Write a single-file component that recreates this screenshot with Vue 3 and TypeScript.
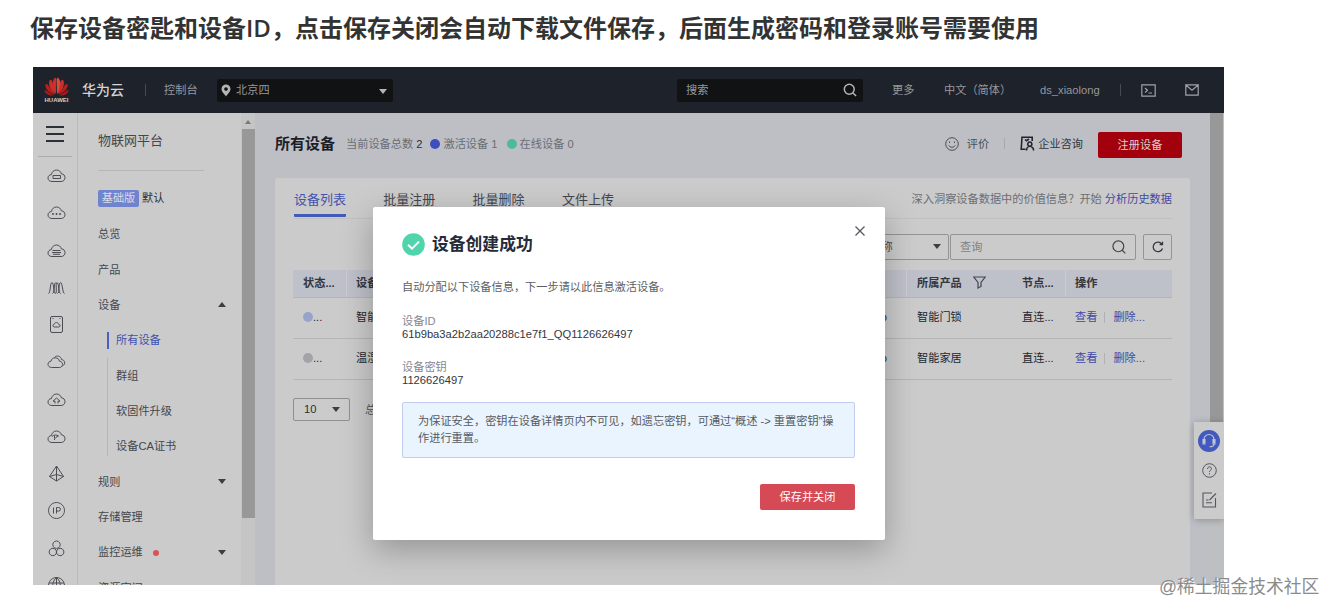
<script setup lang="ts">
interface RailIcon { d: string }
interface NavItem { label: string; arrow?: 'up' | 'down'; dot?: boolean; sub?: boolean; active?: boolean }

const cloud = 'M5 15.500C2.500 15.500 1 14 1 12c0-2 1.500-3.300 3.400-3.400C4.800 6 6.800 4 9.500 4c2.500 0 4.300 1.600 4.900 3.900 2.100 0 3.600 1.600 3.600 3.700 0 2.300-1.600 3.900-3.900 3.900z'

const rail: RailIcon[] = [
  { d: cloud + 'M6 9.500h7.500v3H6z' },
  { d: cloud + 'M5.500 10.500h1v1h-1zM9 10.500h1v1H9zM12.500 10.500h1v1h-1z' },
  { d: cloud + 'M5.500 9.500h8M5 11.500h9M6 13.300h7' },
  { d: 'M1.500 15.500C3.500 15.500 3 4.500 5 4.500s1.500 11 3.500 11S8 4.500 10 4.500s1.500 11 3.500 11M5.500 15.500c2 0 1.500-11 3-11M10.500 15.500c2 0 1-11 3-11s2 11 4 11' },
  { d: 'M5 1.500h9q1.500 0 1.500 1.500v13q0 1.500-1.500 1.500H5q-1.500 0-1.500-1.500V3q0-1.500 1.500-1.500zM7.500 12c-2 0-2-2.500-.3-2.700.3-2.300 4-2.300 4.500 0 2 .2 1.700 2.700 0 2.700zM5.500 3.500h1M12.500 3.500h1' },
  { d: 'M4.500 15.500C2.500 15.500 1 14 1 12.300c0-1.700 1.300-3 3-3.100C4.500 7 6 5.800 8.200 5.800c2.300 0 4 1.500 4.300 3.500 1.900 0 3 1.400 3 3.100 0 1.800-1.300 3.100-3.100 3.100zM7.500 5.500C9.500 3 14 3.800 14.500 7.600c3.500.2 4.500 4.400 1 6.400' },
  { d: cloud + 'M9.500 8l-3.500 3.200h2v2.300M9.500 8l3.500 3.200h-2v2.300' },
  { d: cloud + 'M5 9.500c2-1.800 4.500-2 6.500-.5-2 .5-3.500 2-4.300 4M7.500 8.500v3' },
  { d: 'M9.500 2L2.500 12.500l7 4.500 7-4.500zM9.500 2v15M2.500 12.500l7-2 7 2' },
  { d: 'M9.500 1.500a8 8 0 1 0 .01 0zM6.500 6.500v6M9.500 12.500v-6h2q2 0 2 1.800t-2 1.800h-2' },
  { d: 'M9.500 2a3.700 3.700 0 1 0 .01 0zM5.800 9.300a3.700 3.700 0 1 0 .01 0zM13.200 9.300a3.700 3.700 0 1 0 .01 0z' },
  { d: 'M9.500 1.500a8 8 0 1 0 .01 0zM9.500 1.500v16M9.500 1.500c-5 4-5 12 0 16 5-4 5-12 0-16M2 7h15M2 12h15' },
]

const nav: NavItem[] = [
  { label: '总览' },
  { label: '产品' },
  { label: '设备', arrow: 'up' },
  { label: '所有设备', sub: true, active: true },
  { label: '群组', sub: true },
  { label: '软固件升级', sub: true },
  { label: '设备CA证书', sub: true },
  { label: '规则', arrow: 'down' },
  { label: '存储管理' },
  { label: '监控运维', arrow: 'down', dot: true },
  { label: '资源空间' },
]

const tabs = ['设备列表', '批量注册', '批量删除', '文件上传']

const rows = [
  { tone: 'blue', name: '智能门锁', product: '智能门锁' },
  { tone: 'grey', name: '温湿度', product: '智能家居' },
]
</script>

<template>
  <div class="page">
    <h1 class="heading">保存设备密匙和设备ID，点击保存关闭会自动下载文件保存，后面生成密码和登录账号需要使用</h1>

    <div class="shot">
      <header class="top">
        <div class="logo">
          <svg width="25" height="19" viewBox="0 0 25 19">
            <g fill="#c9302c">
              <path d="M12 17C8 12 7.500 5 10.500 1c1.500-.8 1.800.5 1.800 2z" />
              <path d="M13 17c4-5 4.500-12 1.500-16-1.500-.8-1.800.5-1.800 2z" fill="#df4a40" />
              <path d="M11.200 17.200C6.500 13.500 4 8 5.500 3.500c2-2 3 1 3.500 3.500z" />
              <path d="M13.800 17.200c4.700-3.700 7.200-9.200 5.700-13.700-2-2-3 1-3.500 3.500z" />
              <path d="M10.500 17.500C5 16 1 11.500 1.300 7.500c1.500-1.500 3 .5 4.200 3z" fill="#b8201f" />
              <path d="M14.500 17.500c5.500-1.500 9.500-6 9.200-10-1.500-1.500-3 .5-4.200 3z" fill="#b8201f" />
              <path d="M10 18.300C5.500 19 1.500 17.500.3 13.500c1.500-1 3.500 1 5.200 2.300z" fill="#a81a1c" />
              <path d="M15 18.300c4.500.7 8.500-.8 9.700-4.800-1.500-1-3.500 1-5.200 2.300z" fill="#a81a1c" />
            </g>
          </svg>
          <span>HUAWEI</span>
        </div>
        <div class="brand">华为云</div>
        <i class="vline first"></i>
        <span class="console">控制台</span>
        <div class="region">
          <svg width="10" height="13" viewBox="0 0 10 13"><path fill="#b5b5b5" fill-rule="evenodd" d="M5 .5A4.500 4.500 0 0 1 9.500 5C9.500 8 6.500 10 5 12.500 3.500 10 .5 8 .5 5A4.500 4.500 0 0 1 5 .5zM5 3.200a1.800 1.800 0 1 0 .01 0z" /></svg>
          <span>北京四</span>
          <i class="caret light"></i>
        </div>
        <div class="finder">
          <span>搜索</span>
          <svg width="14" height="14" viewBox="0 0 15 15" fill="none" stroke="#b4b4b4" stroke-width="1.600"><circle cx="6.700" cy="6.700" r="5.300" /><path d="M10.700 10.700l3.300 3.300" /></svg>
        </div>
        <span class="more">更多</span>
        <span class="lang">中文（简体）</span>
        <span class="user">ds_xiaolong</span>
        <i class="vline second"></i>
        <svg class="term" width="15" height="13" viewBox="0 0 15 13" fill="none" stroke="#a0a2a5" stroke-width="1.200"><path d="M.8.8h13.400v11.400H.8zM4 4l2.500 2.200L4 8.500M7.500 9h3.500" /></svg>
        <svg class="mail" width="14" height="12" viewBox="0 0 14 12" fill="none" stroke="#a0a2a5" stroke-width="1.200"><path d="M.8.8h12.400v10.400H.8zM.8 1l6.200 5.200L13.200 1" /></svg>
      </header>

      <div class="body">
        <aside class="rail">
          <div class="burger"><i></i><i></i><i></i></div>
          <div v-for="(icon, n) in rail" :key="n" class="cell">
            <svg width="19" height="19" viewBox="0 0 19 19" fill="none" stroke="#4c4e54" stroke-width="1"><path :d="icon.d" /></svg>
          </div>
        </aside>

        <nav class="nav">
          <div class="platform">物联网平台</div>
          <div class="edition"><b>基础版</b><span>默认</span></div>
          <div v-for="item in nav" :key="item.label" class="item" :class="{ sub: item.sub, active: item.active }">
            <span>{{ item.label }}</span>
            <i v-if="item.dot" class="reddot"></i>
            <i v-if="item.arrow" class="caret" :class="item.arrow"></i>
          </div>
        </nav>
        <div class="scroll"><i class="caret up"></i><div class="thumb"></div></div>

        <main class="main">
          <div class="titlebar">
            <h2>所有设备</h2>
            <span class="meta">当前设备总数 <em>2</em></span>
            <i class="dot act"></i><span class="meta act">激活设备 1</span>
            <i class="dot on"></i><span class="meta">在线设备 0</span>
            <div class="right">
              <svg width="14" height="14" viewBox="0 0 14 14" fill="none" stroke="#4c4e55"><circle cx="7" cy="7" r="6.300" /><path d="M4.500 4.500v1.500M9.500 4.500v1.500M3.800 8.500c1.200 2.300 5.200 2.300 6.400 0" /></svg>
              <span class="rate">评价</span>
              <i class="sep"></i>
              <svg class="consult" width="15" height="15" viewBox="0 0 15 15" fill="none" stroke="#22252d" stroke-width="1.600"><path d="M5.500 13.200H1.200L2 1.300h10.200V5M5 3.500l1.500 1.200L9 3M9.800 6a2.100 2.100 0 1 0 .01 0zM6.500 14.500c0-2 1.300-4.200 3.300-4.200s3.800 2 3.800 4.200" /></svg>
              <span class="ask">企业咨询</span>
              <button class="register">注册设备</button>
            </div>
          </div>

          <section class="panel">
            <div class="tabs">
              <span v-for="(t, n) in tabs" :key="t" class="tab" :class="{ cur: n === 0 }">{{ t }}</span>
              <span class="insight">深入洞察设备数据中的价值信息？开始 <a>分析历史数据</a></span>
            </div>
            <div class="filters">
              <div class="field"><span>设备名称</span><i class="caret down"></i></div>
              <div class="query">
                <span>查询</span>
                <svg width="14" height="14" viewBox="0 0 15 15" fill="none" stroke="#44464c" stroke-width="1.300"><circle cx="6.800" cy="6.800" r="5.800" /><path d="M11 11l3.300 3.300" /></svg>
              </div>
              <div class="refresh">
                <svg width="12" height="12" viewBox="0 0 12 12" fill="none" stroke="#33353b" stroke-width="1.300"><path d="M10.500 7.500A4.800 4.800 0 1 1 9.800 3M10.500.8v2.900H7.600" /></svg>
              </div>
            </div>
            <div class="table">
              <div class="tr head">
                <span>状态...</span><span class="bar">设备名称</span><span></span>
                <span class="bar">所属产品
                  <svg width="13" height="13" viewBox="0 0 13 13" fill="none" stroke="#44464c" stroke-width="1.200"><path d="M.8 1h11.400L8 6.500v4L5 12V6.500z" /></svg>
                </span>
                <span>节点...</span><span class="bar">操作</span>
              </div>
              <div v-for="row in rows" :key="row.product" class="tr">
                <span><i class="state" :class="row.tone"></i>...</span>
                <span>{{ row.name }}</span>
                <span class="tail">o</span>
                <span>{{ row.product }}</span>
                <span>直连...</span>
                <span class="ops"><a>查看</a><i></i><a>删除...</a></span>
              </div>
            </div>
            <div class="pager">
              <div class="size"><span>10</span><i class="caret down"></i></div>
              <span>总条数：2</span>
            </div>
          </section>
        </main>
        <div class="edge"></div>
      </div>

      <div class="helper">
        <svg width="22" height="22" viewBox="0 0 22 22"><circle cx="11" cy="11" r="11" fill="#4259bd" /><path fill="none" stroke="#c0c5da" stroke-width="1.100" d="M6 13V9.500a5 5 0 0 1 10 0V13M5 9.500h2V14H5zM15 9.500h2V14h-2zM16 14c0 2-1.500 2.800-4.500 2.800" /></svg>
        <svg width="15" height="15" viewBox="0 0 15 15" fill="none" stroke="#55575c"><circle cx="7.500" cy="7.500" r="6.800" /><path d="M5.500 6c0-3 4-2.600 4-.3 0 1.500-2 1.500-2 3.200M7.500 10.200v1.200" /></svg>
        <svg width="15" height="16" viewBox="0 0 15 16" fill="none" stroke="#55575c" stroke-width="1.100"><path d="M10 1H1v14h12.500V6M14 1.500L7.500 8M4 8h2.500M4 10.800h6" /></svg>
      </div>

      <div class="modal">
        <svg class="close" width="10" height="10" viewBox="0 0 10 10" stroke="#55585f" stroke-width="1.300"><path d="M.5.5l9 9M9.500.5l-9 9" /></svg>
        <div class="done">
          <svg width="23" height="23" viewBox="0 0 23 23"><circle cx="11.500" cy="11.500" r="11.300" fill="#50d4ab" /><path d="M6 11.700l4 3.900 7-7" fill="none" stroke="#fff" stroke-width="2" /></svg>
          <span>设备创建成功</span>
        </div>
        <p class="lead">自动分配以下设备信息，下一步请以此信息激活设备。</p>
        <dl>
          <dt>设备ID</dt><dd>61b9ba3a2b2aa20288c1e7f1_QQ1126626497</dd>
          <dt>设备密钥</dt><dd>1126626497</dd>
        </dl>
        <div class="tip">为保证安全，密钥在设备详情页内不可见，如遗忘密钥，可通过“概述 -&gt; 重置密钥”操作进行重置。</div>
        <button class="save">保存并关闭</button>
      </div>
    </div>
    <div class="mark">@稀土掘金技术社区</div>
  </div>
</template>

<style>
body { margin: 0; background: #fff; }
</style>

<style scoped>
* { box-sizing: border-box; }
.page {
  position: relative; width: 1338px; height: 615px; overflow: hidden;
  font-family: "Liberation Sans", "Noto Sans CJK SC", sans-serif;
  font-size: 11.2px; line-height: 16px; color: #44474e; white-space: nowrap;
}
i, em { font-style: normal; }
svg { display: block; flex: none; }
button { border: 0; padding: 0; font: inherit; color: #fff; }
.heading {
  margin: 0; height: 67px; padding: 11px 0 0 30px;
  font: 600 24px/34px "Open Sans", "Noto Sans CJK SC", sans-serif; color: #333;
}
.shot { position: relative; width: 1191px; height: 518px; margin-left: 33px; overflow: hidden; background: #bdbfc4; }

.caret { width: 0; height: 0; border: 4px solid transparent; border-bottom-width: 0; border-top: 5px solid #3c3e43; }
.caret.up { border-top-width: 0; border-bottom: 5px solid #3c3e43; }
.caret.light { border-top-color: #b5b5b5; margin-top: 2px; }

.top { height: 46px; display: flex; align-items: center; background: #1e222b; color: #96989c; }
.logo { width: 25px; margin-left: 11px; display: flex; flex-direction: column; align-items: center; }
.logo span { font: 700 6px/7px "Liberation Sans", sans-serif; color: #d0d0d0; margin-top: 1px; }
.brand { width: 43px; margin-left: 13px; font-size: 14px; font-weight: 500; color: #d3d4d6; }
.vline { width: 1px; height: 12px; background: #474a51; }
.first { margin-left: 20px; }
.console { width: 34px; margin-left: 18px; }
.region { width: 176px; height: 23px; margin: 0 1px 0 19px; padding: 0 6px 0 4px; display: flex; align-items: center; background: #111214; border-radius: 2px; }
.region span { flex: 1; margin-left: 5px; }
.finder { width: 186px; height: 23px; margin-left: 283px; padding: 0 6px 0 9px; display: flex; align-items: center; justify-content: space-between; background: #111214; border-radius: 2px; }
.more { width: 23px; margin-left: 29px; }
.lang { width: 67px; margin-left: 29px; }
.user { width: 61px; margin-left: 29px; }
.second { margin-left: 19px; }
.term { margin-left: 20px; }
.mail { margin-left: 29px; }

.body { display: flex; height: 472px; }
.rail { width: 45px; height: 472px; overflow: hidden; background: #cbcbcb; border-right: 1px solid #b9babb; }
.burger { width: 34px; height: 44px; margin-left: 5px; padding: 13px 8px 0; border-bottom: 1px solid #adadaf; }
.burger i { display: block; height: 2px; margin-bottom: 5px; background: #2e3038; }
.cell { height: 37.25px; display: flex; align-items: center; justify-content: center; padding-left: 3px; }

.nav { width: 163px; height: 472px; overflow: hidden; background: #cbcbcb; padding-left: 20px; }
.platform { width: 106px; height: 58px; line-height: 56px; font-size: 13px; border-bottom: 1px solid #b6b6b7; }
.edition { height: 45.6px; padding-top: 9px; display: flex; align-items: center; color: #2e3037; }
.edition b { width: 41px; height: 17px; line-height: 17px; text-align: center; font-weight: 400; background: #7083cf; color: #dadce5; border-radius: 2px; margin-right: 3px; }
.item { height: 35.35px; display: flex; align-items: center; margin-right: 15px; }
.item .caret { margin-left: auto; }
.item.sub { position: relative; margin-left: 9px; padding-left: 9px; }
.item.sub::before { content: ""; width: 1px; height: 35.4px; background: #b5b6b9; position: absolute; left: 0; }
.item.sub:nth-child(9)::before { height: 27px; top: 0; }
.item.sub.active { color: #404fae; }
.item.sub.active::before { width: 2px; height: 17px; background: #4b5fc2; }
.reddot { width: 6px; height: 6px; margin: 2px 0 0 10px; border-radius: 50%; background: #d65454; }
.scroll { width: 14px; background: #c5c5c6; display: flex; flex-direction: column; align-items: center; padding-top: 7px; }
.scroll .caret { border-width: 0 3px 4px; border-bottom-color: #77787a; }
.thumb { width: 13px; height: 389px; margin-top: 5px; background: #989898; }

.main { width: 955px; padding: 0 20px; }
.titlebar { height: 65px; padding-bottom: 4px; display: flex; align-items: center; color: #6a6d74; }
.titlebar h2 { width: 60px; margin: 0 11px 0 0; font-size: 15px; font-weight: 700; line-height: 20px; color: #1b1e28; }
.meta em { color: #2e3037; }
.dot { width: 10px; height: 10px; border-radius: 50%; margin: 0 3px 0 8px; }
.meta.act { margin-right: 1px; }
.dot.act { background: #3c50bd; }
.dot.on { background: #4cba9b; }
.right { margin-left: auto; margin-right: 8px; display: flex; align-items: center; }
.rate { margin-left: 8px; color: #4c4e55; }
.sep { width: 1px; height: 11px; margin: 0 15px; background: #a6a8ac; }
.ask { margin: 0 15px 0 3px; color: #33363e; }
.register { width: 84px; height: 26px; margin-top: 2px; background: #a1000c; color: #ded0d1; border-radius: 2px; }

.panel { height: 407px; padding: 0 18px 0 19px; background: #cbcbcb; border-radius: 3px 3px 0 0; }
.tabs { height: 41px; display: flex; border-bottom: 1px solid #c0c0c1; }
.tab { width: 52px; height: 39px; margin-right: 37.3px; line-height: 43px; font-size: 13px; }
.tab.cur { color: #4453ae; border-bottom: 3px solid #435bb8; border-radius: 1px; }
.insight { margin-left: auto; line-height: 43px; color: #6c6e73; }
a { color: #3f49a5; }
.filters { height: 26px; margin-top: 15px; display: flex; justify-content: flex-end; }
.filters > div { display: flex; align-items: center; border: 1px solid #939496; border-radius: 2px; height: 26px; padding-bottom: 1px; }
.filters > .field { width: 113px; justify-content: space-between; padding: 0 7px 1px 11px; }
.filters > .query { width: 186px; margin-left: 1px; justify-content: space-between; padding: 0 9px 1px; color: #7f8186; }
.refresh { width: 29px; margin-left: 7px; justify-content: center; }
.table { margin-top: 10px; margin-left: -1px; }
.tr { display: grid; grid-template-columns: 53px 500px 60px 116px 43px 107px; height: 41px; border-bottom: 1px solid #b4b5b7; color: #24272f; }
.tr > span { display: flex; align-items: center; padding: 0 0 2px 10px; }
.head { height: 28px; font-weight: 700; background: #bfc1ca; color: #34373f; }
.tr > .bar { border-left: 1px solid #cbcccf; padding-left: 9px; }
.tr > span:nth-child(4) { padding-left: 11px; }
.tr > .bar:nth-child(4) { padding-left: 10px; }
.tr > span:nth-child(5) { padding-left: 0; }
.head svg { margin-left: 11px; }
.state { width: 10px; height: 10px; border-radius: 50%; }
.state.blue { background: #97a3cb; }
.state.grey { background: #a2a4a8; }
.tr > .tail { justify-content: flex-end; padding-right: 19px; }
.ops i { width: 1px; height: 11px; margin: 0 8px 0 7px; background: #b0b1b4; }
.pager { height: 23px; margin-top: 18px; margin-left: -1px; display: flex; align-items: center; color: #54565b; }
.size { width: 57px; height: 23px; margin-right: 15px; padding: 0 9px 1px 10px; display: flex; align-items: center; justify-content: space-between; border: 1px solid #8f9092; border-radius: 2px; color: #2d2f35; }
.edge { width: 14px; height: 472px; background: linear-gradient(#989898, #989898) 0 0 / 13px 330px no-repeat, #bebfc0; }

.helper { position: absolute; left: 1161px; top: 355px; width: 30px; height: 97px; padding-top: 8px; display: flex; flex-direction: column; align-items: center; background: #cbcbcb; box-shadow: 0 1px 7px rgba(0, 0, 0, .25); }
.helper svg + svg { margin-top: 11px; }
.helper svg:last-child { margin-top: 14px; }

.modal { position: absolute; left: 340px; top: 140px; width: 512px; height: 333px; padding: 26px 30px 0 29px; background: #fff; border-radius: 2px; box-shadow: 0 10px 32px rgba(0, 0, 0, .27); white-space: normal; }
.close { position: absolute; right: 20px; top: 19px; }
.done { height: 23px; display: flex; align-items: center; }
.done span { margin-left: 7px; font-size: 16.8px; font-weight: 700; line-height: 23px; color: #252b3a; }
.lead { margin: 23px 0 0; line-height: 16px; color: #5b5e66; }
dl { margin: 20px 0 0; line-height: 13px; }
dt { color: #858790; }
dd { margin: 0 0 20px; color: #33363e; }
.tip { height: 56px; margin-top: -5px; padding: 10px 15px; line-height: 17px; background: #e9f4fe; border: 1px solid #c0cdf0; border-radius: 2px; color: #565a63; }
.save { display: block; width: 95px; height: 26px; margin: 26px 0 0 auto; background: #d64a55; border-radius: 2px; }

.mark { position: absolute; left: 1159px; top: 575px; font-size: 17.8px; line-height: 24px; color: #8b8b8b; text-shadow: 1px 1px 0 #fff; }
</style>
